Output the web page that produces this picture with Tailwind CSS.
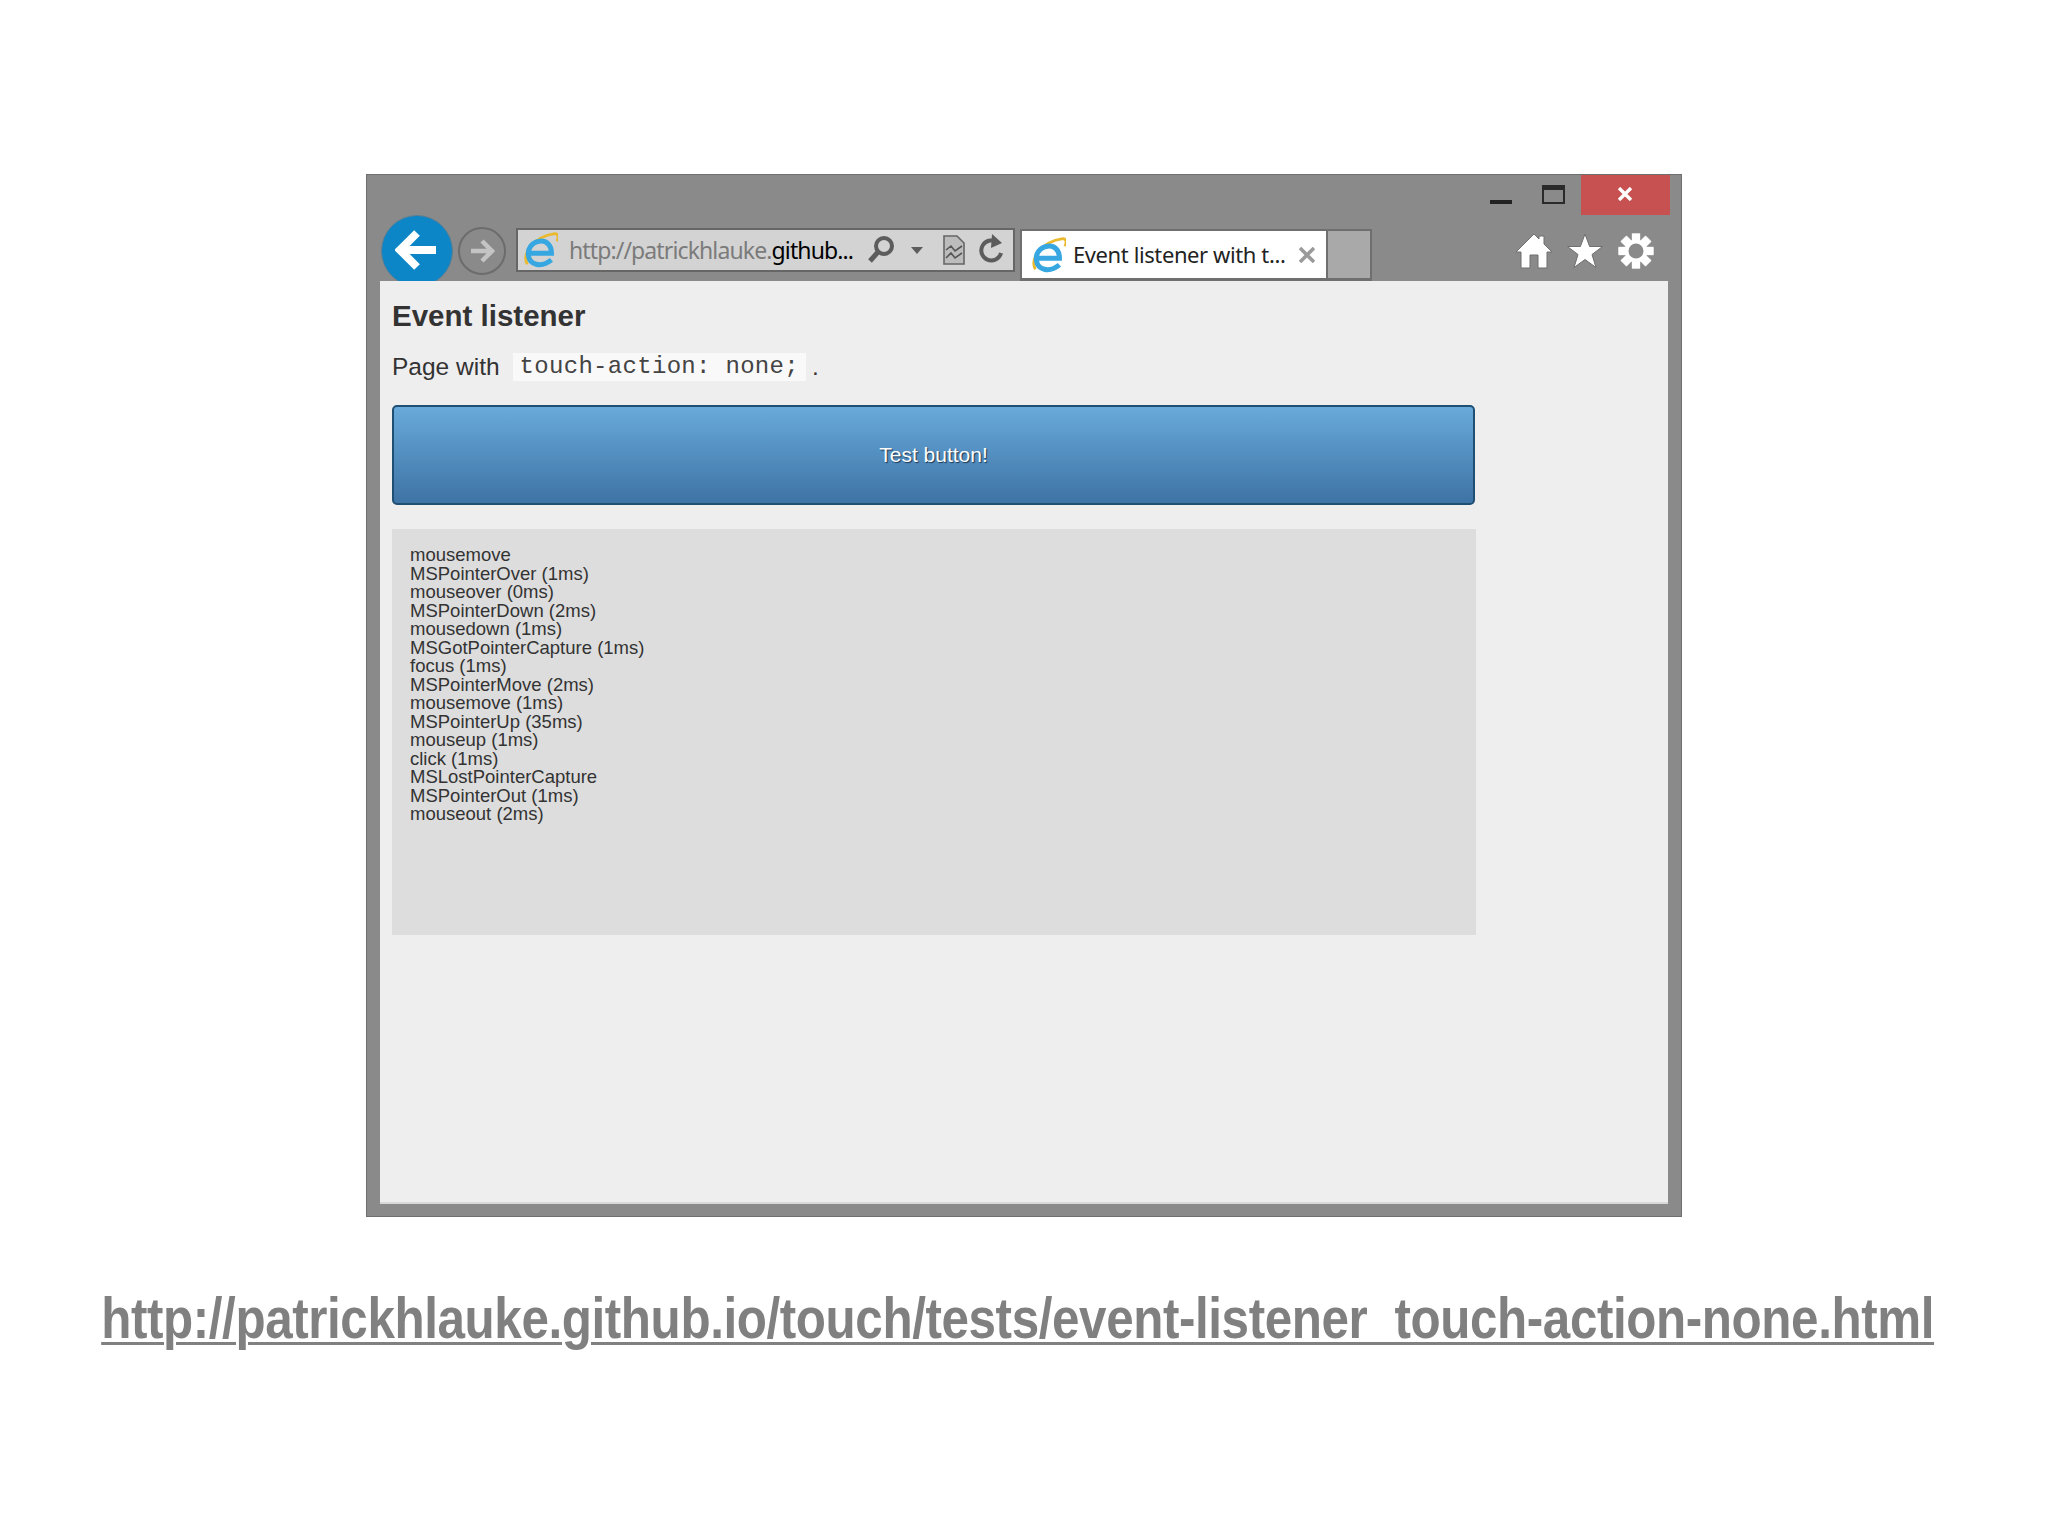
<!DOCTYPE html>
<html lang="en">
<head>
    <meta charset="UTF-8">
    <title>Event listener</title>
    <script src="https://cdn.jsdelivr.net/npm/@tailwindcss/browser@4"></script>
</head>
<body class="bg-white font-['Liberation_Sans',sans-serif]">
<div class="w-[2048px] h-[1536px] flex flex-col items-center pt-[174px] overflow-hidden">

    <!-- IE window -->
    <div class="w-[1316px] h-[1043px] border border-[#6f6f6f] bg-[#8a8a8a] flex flex-col px-[13px] pb-[12px] shrink-0">

        <!-- Window buttons -->
        <div class="h-[40px] flex justify-end items-start -mr-[2px] shrink-0">
            <div class="w-[22px] h-[4px] bg-[#222] mt-[25px]"></div>
            <div class="w-[23px] h-[19px] border-2 border-t-[5px] border-[#2a2a2a] mt-[10px] ml-[30px]"></div>
            <div class="w-[89px] h-[40px] bg-[#c75050] ml-[16px] pb-[2px] pr-[2px] flex items-center justify-center">
                <svg width="16" height="14" viewBox="0 0 16 14"><path d="M2 1 L14 13 M14 1 L2 13" stroke="#fff" stroke-width="3.4"/></svg>
            </div>
        </div>

        <!-- Toolbar -->
        <div class="h-[66px] flex items-start shrink-0">
            <div class="w-[72px] h-[72px] ml-[1px] shrink-0 rounded-full bg-[#0c86c6] border border-[#5f7f92] flex items-center justify-center pb-[2px]">
                <svg width="44" height="42" viewBox="0 0 44 42"><path d="M22 4 L5 21 L22 38 M6 21 H41" fill="none" stroke="#fff" stroke-width="8"/></svg>
            </div>
            <div class="w-[48px] h-[48px] ml-[5px] mt-[12px] shrink-0 rounded-full border-2 border-[#6c6c6c] flex items-center justify-center">
                <svg width="28" height="26" viewBox="0 0 28 26"><path d="M14 3 L24 13 L14 23 M23 13 H3" fill="none" stroke="#c4c4c4" stroke-width="4.5"/></svg>
            </div>

            <!-- Address bar -->
            <div class="w-[499px] h-[44px] ml-[10px] mt-[13px] shrink-0 bg-[#d3d3d3] border-2 border-[#666] flex items-center pl-[5px]">
                <svg width="35" height="36" viewBox="3 2 32 32" class="shrink-0">
                    <path d="M7 31 C2 22 12 6 32 3 C35 3 36 6 34 10" fill="none" stroke="#eab92d" stroke-width="2.6"/>
                    <path d="M8 21 H29 C29 13 24 9 18 10 C11 11 7 17 8 23 C9 31 19 35 29 27" fill="none" stroke="#37a7e2" stroke-width="4.6"/>
                </svg>
                <span class="ml-[11px] text-[23px] tracking-[-0.88px] text-[#7b7b7b] font-['Noto_Sans',sans-serif] whitespace-nowrap w-[285px] shrink-0">http://patrickhlauke.<span class="text-black">github...</span></span>
                <svg width="30" height="30" viewBox="0 0 30 30" class="ml-[12px] shrink-0"><circle cx="18" cy="11" r="8" fill="none" stroke="#5c5c5c" stroke-width="4"/><path d="M12 17 L4 26" stroke="#5c5c5c" stroke-width="5"/></svg>
                <svg width="12" height="7" viewBox="0 0 12 7" class="ml-[15px] shrink-0"><path d="M0 0 H12 L6 7 Z" fill="#5c5c5c"/></svg>
                <svg width="22" height="30" viewBox="0 0 22 30" class="ml-[20px] shrink-0"><path d="M1 1 H14 L21 8 V29 H1 Z" fill="#bcbcbc" stroke="#666" stroke-width="1.6"/><path d="M3 15 L8 11 L12 16 L19 11 M3 23 L8 18 L12 23 L19 18" fill="none" stroke="#555" stroke-width="1.6"/></svg>
                <svg width="26" height="32" viewBox="0 0 26 32" class="ml-[13px] shrink-0"><path d="M20 9 A10 10 0 1 0 23 19" fill="none" stroke="#5c5c5c" stroke-width="4"/><path d="M14 0 L24 9 L13 14 Z" fill="#5c5c5c"/></svg>
            </div>

            <!-- Tabs -->
            <div class="w-[308px] h-[52px] ml-[5px] mt-[14px] shrink-0 bg-white border-2 border-[#6f6f6f] border-b-[3px] flex items-center pl-[9px]">
                <svg width="35" height="36" viewBox="3 2 32 32" class="shrink-0">
                    <path d="M7 31 C2 22 12 6 32 3 C35 3 36 6 34 10" fill="none" stroke="#eab92d" stroke-width="2.6"/>
                    <path d="M8 21 H29 C29 13 24 9 18 10 C11 11 7 17 8 23 C9 31 19 35 29 27" fill="none" stroke="#37a7e2" stroke-width="4.6"/>
                </svg>
                <span class="ml-[7px] text-[22px] tracking-[-0.4px] text-[#222] font-['Noto_Sans',sans-serif] whitespace-nowrap w-[216px] shrink-0">Event listener with t...</span>
                <svg width="16" height="16" viewBox="0 0 16 16" class="ml-[10px] shrink-0"><path d="M1 1 L15 15 M15 1 L1 15" stroke="#9a9a9a" stroke-width="3.6"/></svg>
            </div>
            <div class="w-[44px] h-[52px] mt-[14px] shrink-0 bg-[#a9a9a9] border-2 border-l-0 border-[#6f6f6f] border-b-[3px]"></div>

            <!-- Home, favourites, tools -->
            <div class="ml-auto mr-[14px] mt-[18px] flex gap-[15px]">
                <svg width="36" height="36" viewBox="0 0 36 36"><path d="M18 1 L23 6 V3 H28 V11 L36 19 H31 V35 H22 V22 H14 V35 H5 V19 H0 Z" fill="#fff" stroke="#6f6f6f" stroke-width="1"/></svg>
                <svg width="36" height="36" viewBox="0 0 36 36"><path d="M18 1 L22.6 13.5 H35.5 L25 21.5 L29 34.5 L18 26.5 L7 34.5 L11 21.5 L.5 13.5 H13.4 Z" fill="#fff" stroke="#6f6f6f" stroke-width="1"/></svg>
                <svg width="36" height="36" viewBox="0 0 36 36">
                    <g fill="#fff" stroke="#777" stroke-width="0.5">
                        <rect x="13.5" y="0" width="9" height="36" rx="1"/>
                        <rect x="13.5" y="0" width="9" height="36" rx="1" transform="rotate(45 18 18)"/>
                        <rect x="13.5" y="0" width="9" height="36" rx="1" transform="rotate(90 18 18)"/>
                        <rect x="13.5" y="0" width="9" height="36" rx="1" transform="rotate(135 18 18)"/>
                    </g>
                    <circle cx="18" cy="18" r="11.5" fill="#fff"/>
                    <circle cx="18" cy="18" r="7.5" fill="#8a8a8a"/>
                </svg>
            </div>
        </div>

        <!-- Page -->
        <div class="relative flex-1 bg-[#efeeef] border-b-2 border-[#d8d8d8] pl-[12px] pt-[18px] text-[#333]">
            <h1 class="text-[29.5px] leading-[34px] font-bold">Event listener</h1>
            <p class="mt-[19px] h-[30px] flex items-center text-[24.5px]">
                Page with
                <code class="ml-[13px] h-[28px] px-[7px] bg-[#f9f9f9] font-['Liberation_Mono',monospace] text-[24px] text-[#444] tracking-[0.3px] flex items-center">touch-action: none;</code>
                <span class="ml-[6px]">.</span>
            </p>
            <button class="block mt-[23px] w-[1083px] h-[100px] rounded-[5px] border-2 border-[#1f4f73] bg-gradient-to-b from-[#68aadb] to-[#3e73a5] text-white text-[21px] [text-shadow:1px_1px_1px_#1a3550]">Test button!</button>
            <div class="mt-[24px] w-[1084px] h-[406px] bg-[#dddddd] pl-[18px] pt-[17px] text-[18.5px] leading-[18.5px] text-[#333]">
                <div>mousemove</div>
                <div>MSPointerOver (1ms)</div>
                <div>mouseover (0ms)</div>
                <div>MSPointerDown (2ms)</div>
                <div>mousedown (1ms)</div>
                <div>MSGotPointerCapture (1ms)</div>
                <div>focus (1ms)</div>
                <div>MSPointerMove (2ms)</div>
                <div>mousemove (1ms)</div>
                <div>MSPointerUp (35ms)</div>
                <div>mouseup (1ms)</div>
                <div>click (1ms)</div>
                <div>MSLostPointerCapture</div>
                <div>MSPointerOut (1ms)</div>
                <div>mouseout (2ms)</div>
            </div>
        </div>
    </div>

    <!-- Link to the test page -->
    <a href="#" class="mt-[68px] -ml-[12px] text-[58px] leading-[66px] font-bold text-[#808080] underline decoration-[3px] underline-offset-[4px] whitespace-nowrap tracking-[-0.5px] scale-x-[0.852]">http://patrickhlauke.github.io/touch/tests/event-listener_touch-action-none.html</a>
</div>
</body>
</html>
